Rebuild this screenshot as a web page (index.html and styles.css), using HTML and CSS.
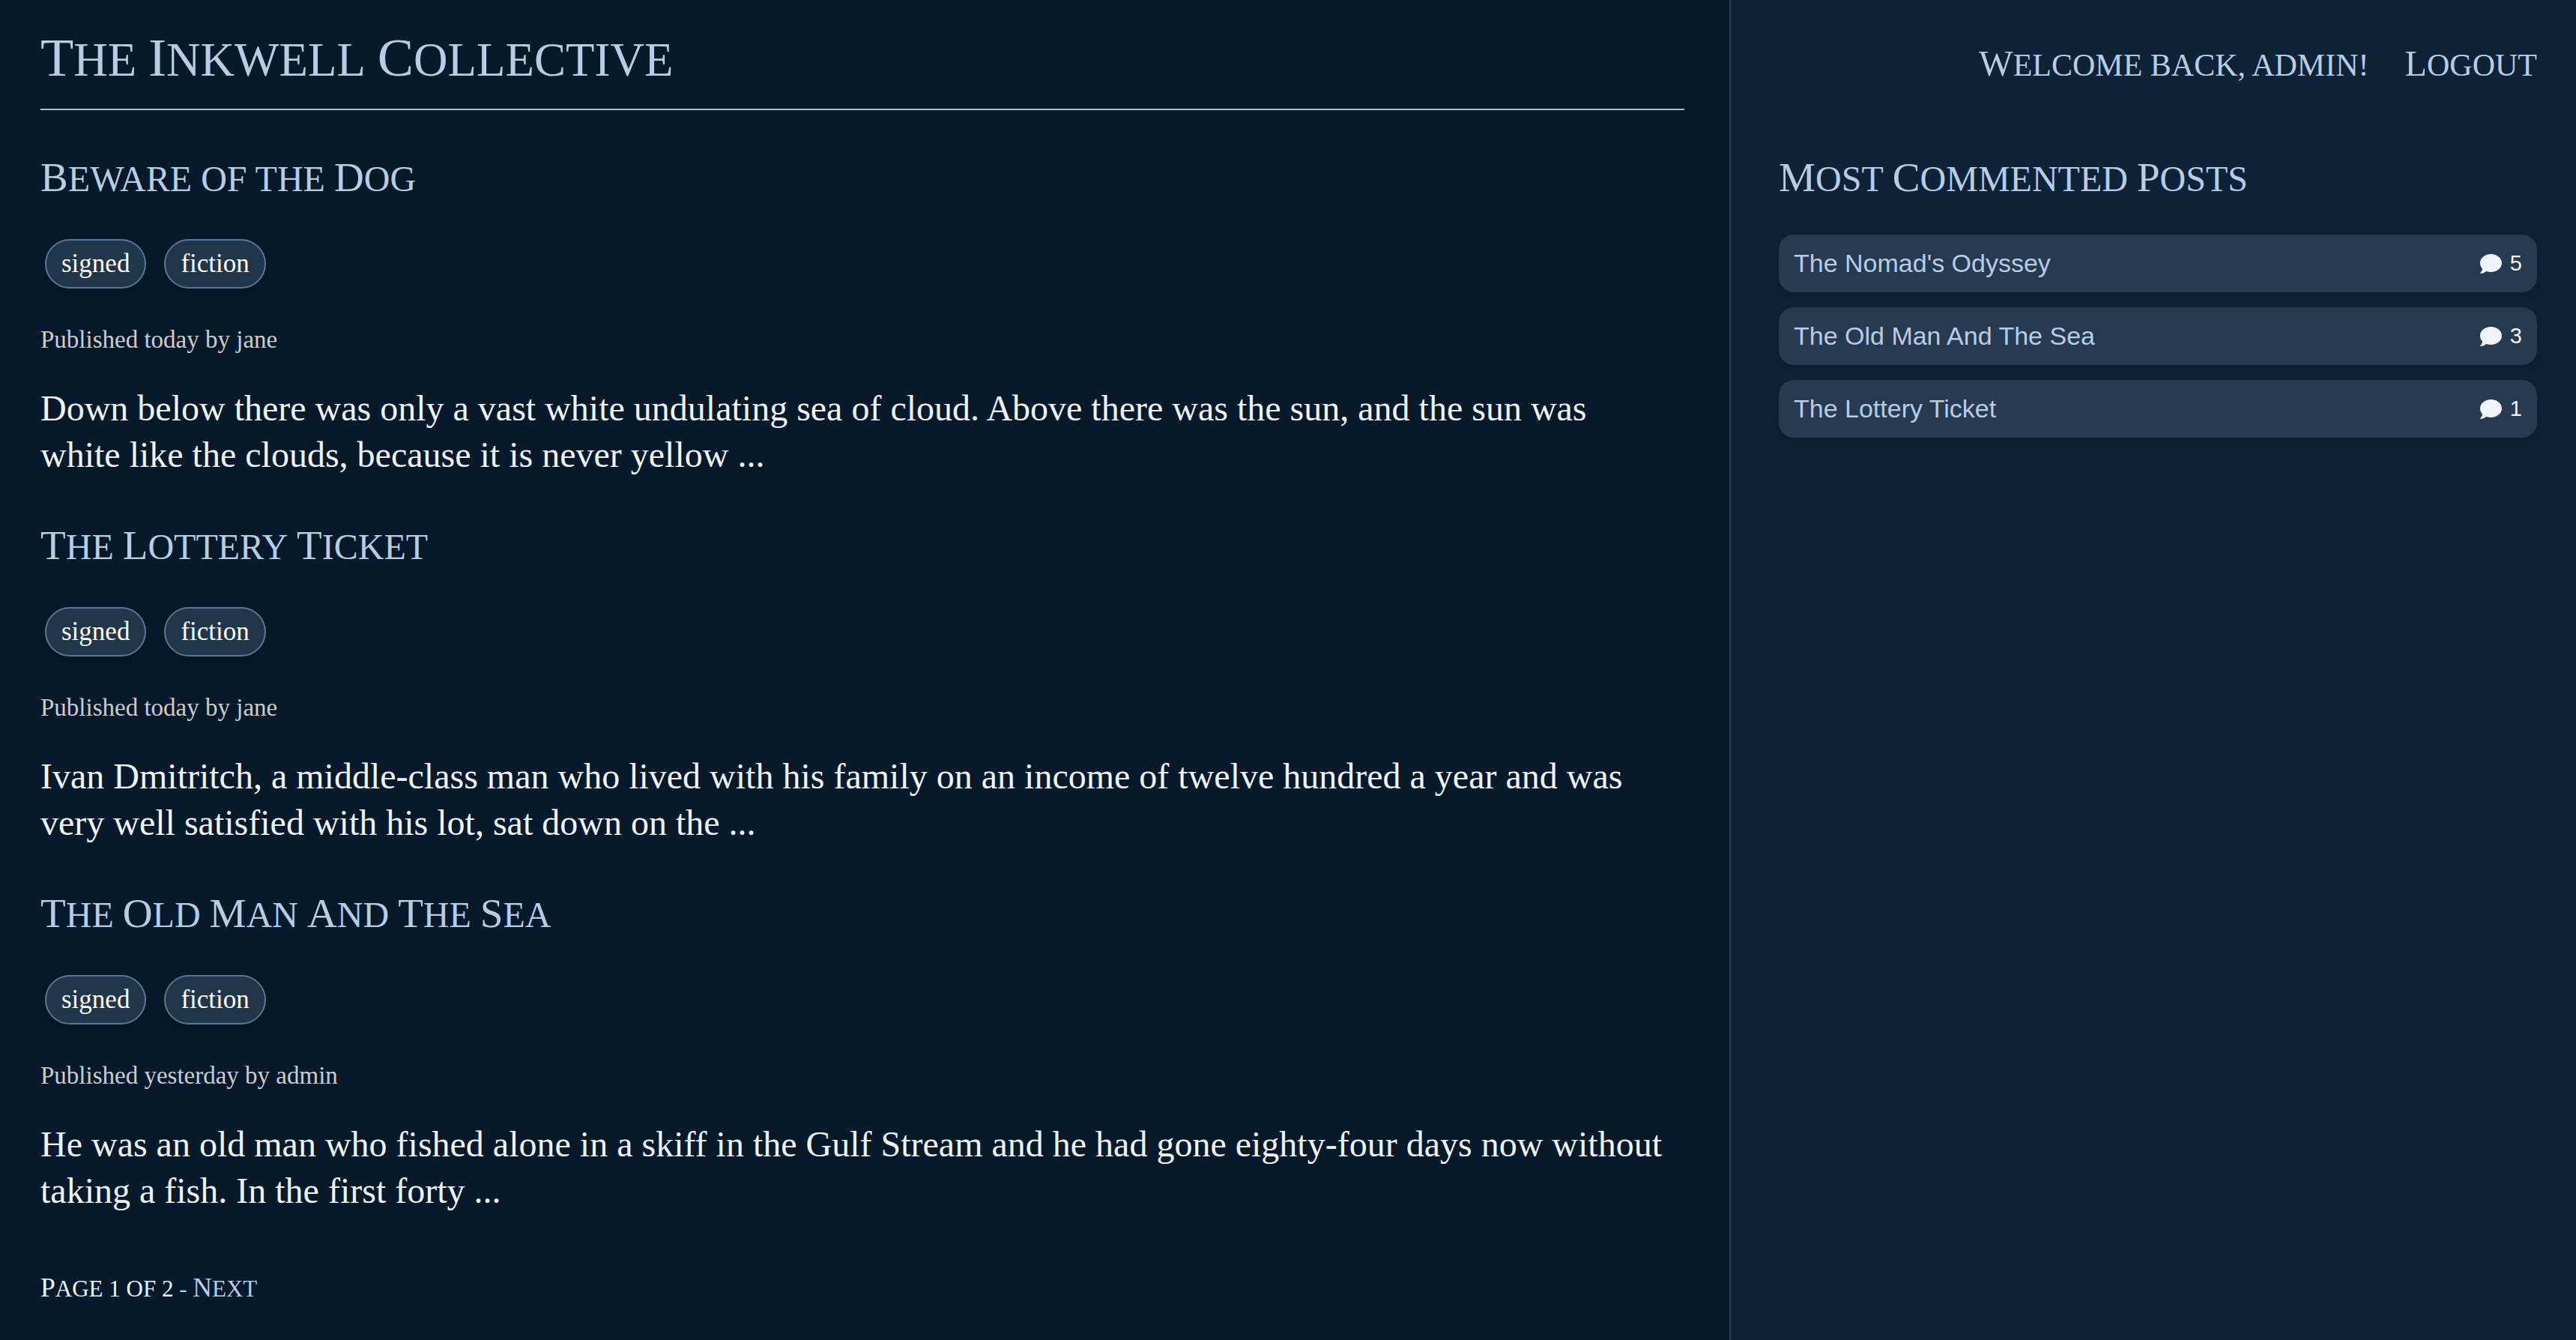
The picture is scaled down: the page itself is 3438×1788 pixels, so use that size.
FILE: index.html
```html
<!DOCTYPE html>
<html lang="en">
<head>
  <meta charset="utf-8">
  <meta name="viewport" content="width=device-width, initial-scale=1">
  <title>The Inkwell Collective</title>
  <link rel="stylesheet" href="styles.css">
</head>
<body>
  <svg class="sprite" aria-hidden="true">
    <symbol id="comment" viewBox="0 0 29 26">
      <path d="M14.5 0C22.500 0 29 5.200 29 12S22.500 24 14.500 24C12.200 24 10 23.600 8 22.900C6.200 24.500 3.300 26 0.500 26C-0.100 26-0.100 25.400 0.300 25C1.700 23.600 2.900 21.700 3.100 19.700C1.200 17.600 0 15 0 12C0 5.200 6.500 0 14.500 0Z"/>
    </symbol>
  </svg>
  <div class="layout">
    <main class="main">
      <header class="masthead">
        <h1 class="site-title caps"><a href="#"><span class="cap">The</span> <span class="cap">Inkwell</span> <span class="cap">Collective</span></a></h1>
      </header>
      <article class="post">
        <h2 class="title caps"><a href="#"><span class="cap">Beware</span> of the <span class="cap">Dog</span></a></h2>
        <div class="tags"><a class="tag" href="#">signed</a><a class="tag" href="#">fiction</a></div>
        <p class="meta">Published today by jane</p>
        <p class="excerpt">Down below there was only a vast white undulating sea of cloud. Above there was the sun, and the sun was white like the clouds, because it is never yellow ...</p>
      </article>
      <article class="post">
        <h2 class="title caps"><a href="#"><span class="cap">The</span> <span class="cap">Lottery</span> <span class="cap">Ticket</span></a></h2>
        <div class="tags"><a class="tag" href="#">signed</a><a class="tag" href="#">fiction</a></div>
        <p class="meta">Published today by jane</p>
        <p class="excerpt">Ivan Dmitritch, a middle-class man who lived with his family on an income of twelve hundred a year and was very well satisfied with his lot, sat down on the ...</p>
      </article>
      <article class="post">
        <h2 class="title caps"><a href="#"><span class="cap">The</span> <span class="cap">Old</span> <span class="cap">Man</span> <span class="cap">And</span> <span class="cap">The</span> <span class="cap">Sea</span></a></h2>
        <div class="tags"><a class="tag" href="#">signed</a><a class="tag" href="#">fiction</a></div>
        <p class="meta">Published yesterday by admin</p>
        <p class="excerpt">He was an old man who fished alone in a skiff in the Gulf Stream and he had gone eighty-four days now without taking a fish. In the first forty ...</p>
      </article>
      <div class="pagination caps"><span class="cap">Page</span> 1 of 2 <a href="#">- <span class="cap">Next</span></a></div>
    </main>
    <aside class="sidebar">
      <nav class="account caps">
        <a href="#"><span class="cap">Welcome</span> back, admin!</a>
        <a href="#"><span class="cap">Logout</span></a>
      </nav>
      <h2 class="title caps"><span class="cap">Most</span> <span class="cap">Commented</span> <span class="cap">Posts</span></h2>
      <ul class="ranking">
        <li class="ranked"><a href="#">The Nomad's Odyssey</a><span class="count"><svg class="icon" aria-hidden="true"><use href="#comment"/></svg>5</span></li>
        <li class="ranked"><a href="#">The Old Man And The Sea</a><span class="count"><svg class="icon" aria-hidden="true"><use href="#comment"/></svg>3</span></li>
        <li class="ranked"><a href="#">The Lottery Ticket</a><span class="count"><svg class="icon" aria-hidden="true"><use href="#comment"/></svg>1</span></li>
      </ul>
    </aside>
  </div>
</body>
</html>
```
FILE: styles.css
```css
* {
  box-sizing: border-box;
}

body {
  margin: 0;
  background: #061a2b;
  color: #f0f4fa;
  font-family: "Liberation Serif", serif;
}

a {
  color: #b8cce4;
  text-decoration: none;
}

.sprite {
  display: none;
}

.layout {
  display: flex;
  min-height: 100vh;
}

.main {
  flex: 1;
  padding: 40px 60px 40px 54px;
}

.sidebar {
  width: 1130px;
  max-width: 33%;
  padding: 52px 52px 40px 64px;
  border-left: 2px solid #233f58;
  background: #0e2338;
}

/* Capitals with slightly taller initials */
.caps {
  margin: 0;
  font-weight: 400;
  text-transform: uppercase;
}

.cap {
  display: inline-block;
}

.cap::first-letter {
  font-size: 115%;
  line-height: 0;
}

.masthead {
  border-bottom: 2px solid #bbb;
}

.site-title {
  height: 105px;
  font-size: 63px;
  line-height: 80px;
}

.title {
  color: #b8cce4;
  font-size: 48px;
  line-height: 60px;
}

.post {
  padding-top: 62px;
}

.tags {
  display: flex;
  gap: 24px;
  padding: 50px 6px 0;
}

.tag {
  padding: 0 20px;
  border: 2px solid #5a7795;
  border-radius: 33px;
  background: #20364b;
  box-shadow: 0 4px 8px rgba(0, 0, 0, 0.2);
  color: #fff;
  font-size: 35px;
  line-height: 62px;
}

.meta {
  margin: 48px 0 0;
  color: #ccc;
  font-size: 33px;
  line-height: 40px;
}

.excerpt {
  margin: 41px 0 0;
  padding-right: 20px;
  font-size: 48px;
  line-height: 62px;
}

.pagination {
  padding-top: 80px;
  font-size: 31px;
  line-height: 40px;
}

.account {
  display: flex;
  justify-content: flex-end;
  gap: 48px;
  font-size: 42px;
  line-height: 70px;
}

.sidebar .title {
  padding-top: 87px;
}

.ranking {
  display: grid;
  gap: 20px;
  margin: 44px 0 0;
  padding: 0;
  list-style: none;
  font-family: "Liberation Sans", sans-serif;
}

.ranked {
  display: flex;
  justify-content: space-between;
  align-items: center;
  padding: 0 20px;
  border-radius: 20px;
  background: #263b52;
  box-shadow: 0 4px 10px rgba(0, 0, 0, 0.2);
  font-size: 34px;
  line-height: 77px;
}

.count {
  display: flex;
  align-items: center;
  gap: 11px;
  font-size: 29px;
}

.icon {
  width: 29px;
  height: 26px;
  fill: currentColor;
}
```
